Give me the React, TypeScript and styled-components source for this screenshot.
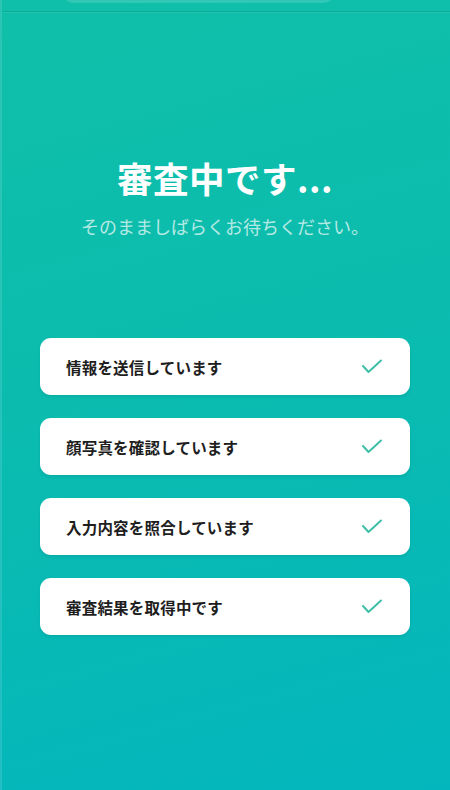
import React from 'react';
import styled, { createGlobalStyle } from 'styled-components';

const GlobalStyle = createGlobalStyle`
  html, body {
    margin: 0;
    padding: 0;
  }
  body {
    font-family: 'Noto Sans CJK JP', 'Noto Sans', sans-serif;
    -webkit-font-smoothing: antialiased;
  }
`;

const Screen = styled.div`
  width: 450px;
  height: 790px;
  box-sizing: border-box;
  overflow: hidden;
  display: flex;
  flex-direction: column;
  background: linear-gradient(165deg, #10bfa9 0%, #0bbcae 45%, #03b6bd 100%);
  border-left: 2px solid rgba(255, 255, 255, 0.12);
`;

const TopBar = styled.div`
  height: 11px;
  flex-shrink: 0;
  overflow: hidden;
  border-bottom: 1px solid rgba(0, 110, 95, 0.22);
  box-shadow: 0 1px 0 rgba(255, 255, 255, 0.08);
`;

const TopPill = styled.div`
  width: 273px;
  height: 16px;
  margin: -13px 0 0 60px;
  border-radius: 0 0 12px 12px;
  background: rgba(255, 255, 255, 0.14);
`;

const Content = styled.main`
  display: flex;
  flex-direction: column;
  align-items: center;
  padding: 145px 40px 0 38px;
`;

const Title = styled.h1`
  margin: 0;
  font-size: 35.5px;
  line-height: 42px;
  font-weight: 700;
  color: #ffffff;
  letter-spacing: 0.5px;
`;

const Subtitle = styled.p`
  margin: 14px 0 0;
  font-size: 18px;
  line-height: 26px;
  font-weight: 400;
  color: rgba(255, 255, 255, 0.7);
`;

const StepList = styled.ul`
  list-style: none;
  margin: 99px 0 0;
  padding: 0;
  width: 100%;
  display: flex;
  flex-direction: column;
  gap: 23px;
`;

const StepCard = styled.li`
  height: 57px;
  box-sizing: border-box;
  display: flex;
  align-items: center;
  justify-content: space-between;
  padding: 0 28px 0 26px;
  background: #ffffff;
  border-radius: 11px;
  box-shadow: 0 2px 3px rgba(0, 80, 80, 0.12);
`;

const StepLabel = styled.span`
  font-size: 15.5px;
  font-weight: 700;
  color: #1e1e1e;
  letter-spacing: 0.2px;
`;

const Check = () => (
  <svg width="20" height="15" viewBox="0 0 20 15" fill="none">
    <polyline
      points="1,7 6.5,13 19,1.5"
      stroke="#3fbfa7"
      strokeWidth="2"
      strokeLinecap="round"
      strokeLinejoin="round"
    />
  </svg>
);

const steps = [
  '情報を送信しています',
  '顔写真を確認しています',
  '入力内容を照合しています',
  '審査結果を取得中です',
];

const App: React.FC = () => {
  return (
    <>
      <GlobalStyle />
      <Screen>
        <TopBar>
          <TopPill />
        </TopBar>
        <Content>
          <Title>審査中です...</Title>
          <Subtitle>そのまましばらくお待ちください。</Subtitle>
          <StepList>
            {steps.map((s) => (
              <StepCard key={s}>
                <StepLabel>{s}</StepLabel>
                <Check />
              </StepCard>
            ))}
          </StepList>
        </Content>
      </Screen>
    </>
  );
};

export default App;
